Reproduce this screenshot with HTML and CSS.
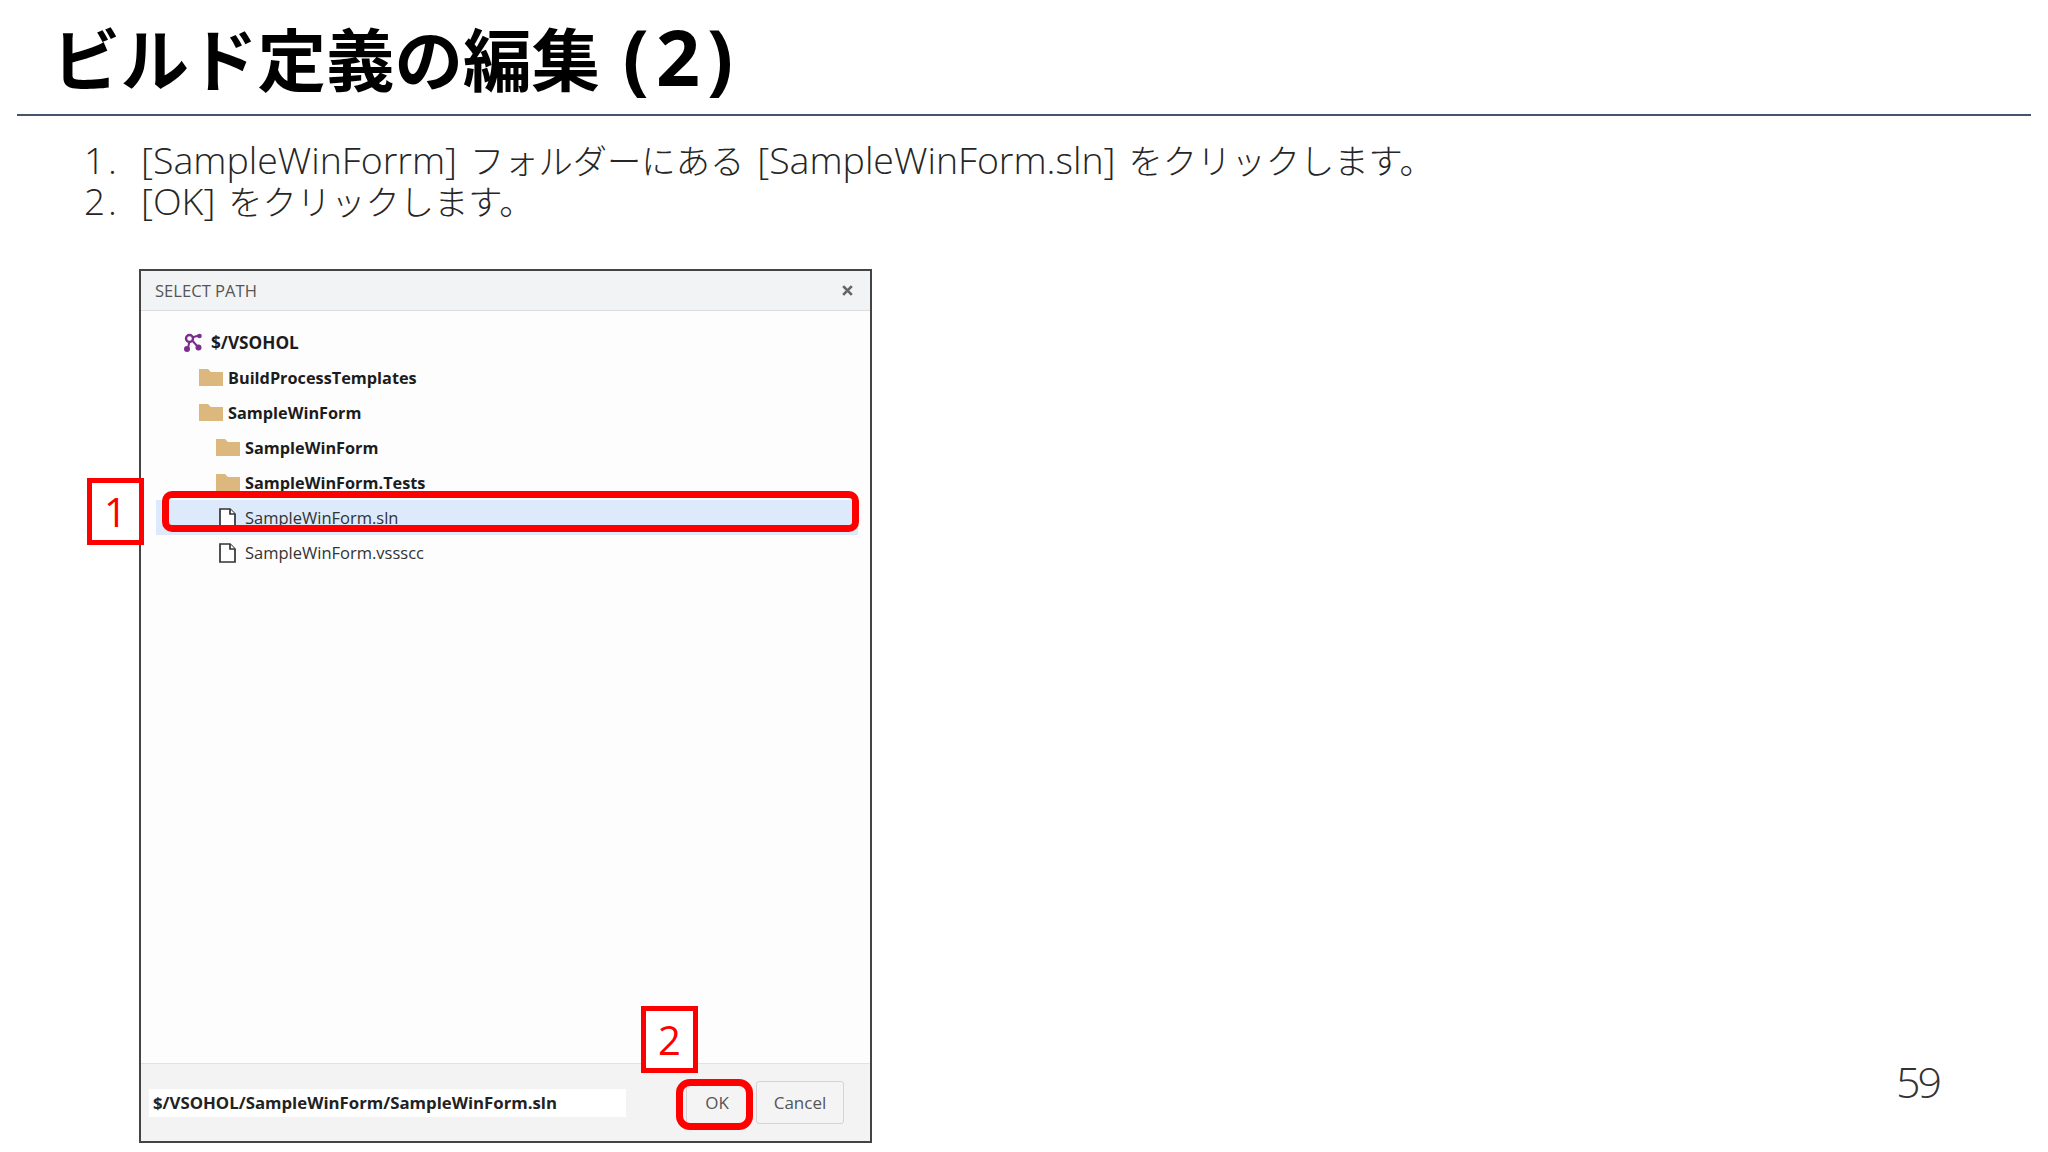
FILE: index.html
```html
<!DOCTYPE html>
<html lang="ja">
<head>
  <meta charset="UTF-8">
  <title>ビルド定義の編集 (2)</title>
  <link rel="stylesheet" href="styles.css">
</head>
<body>
  <div class="header">
    <h1>ビルド定義の編集 <span class="title-num">(2)</span></h1>
  </div>

  <ol class="steps">
    <li><span class="step-no">1.</span><span><span class="lat">[SampleWinForrm]</span> フォルダーにある <span class="lat">[SampleWinForm.sln]</span> をクリックします。</span></li>
    <li><span class="step-no">2.</span><span><span class="lat">[OK]</span> をクリックします。</span></li>
  </ol>

  <div class="content">
    <div class="dialog">
      <div class="dialog-title">
        <span>SELECT PATH</span>
        <svg class="close" viewBox="0 0 12 12"><path d="M2 2l8 8M10 2l-8 8"/></svg>
      </div>

      <div class="tree">
        <div class="row root">
          <svg class="repo-icon" viewBox="0 0 18 19">
            <path d="M6 5l8 9M6 5l9-2.500M6 5l-2 10.500" class="repo-line"/>
            <circle cx="5.500" cy="5.500" r="3.500" class="repo-ring"/>
            <circle cx="15.500" cy="3" r="2.300"/>
            <circle cx="14.500" cy="14.500" r="3"/>
            <circle cx="3" cy="16" r="3"/>
          </svg>
          <span>$/VSOHOL</span>
        </div>
        <div class="row level1">
          <svg class="folder" viewBox="0 0 24 17"><path d="M0 0h9l3 3h12v14H0z"/></svg>
          <span>BuildProcessTemplates</span>
        </div>
        <div class="row level1">
          <svg class="folder" viewBox="0 0 24 17"><path d="M0 0h9l3 3h12v14H0z"/></svg>
          <span>SampleWinForm</span>
        </div>
        <div class="row level2">
          <svg class="folder" viewBox="0 0 24 17"><path d="M0 0h9l3 3h12v14H0z"/></svg>
          <span>SampleWinForm</span>
        </div>
        <div class="row level2">
          <svg class="folder" viewBox="0 0 24 17"><path d="M0 0h9l3 3h12v14H0z"/></svg>
          <span>SampleWinForm.Tests</span>
        </div>
        <div class="row level2 file selected">
          <svg class="file-icon" viewBox="0 0 17 20"><path d="M1 1h10l5 5v13H1z"/><path d="M11 1v5h5"/></svg>
          <span>SampleWinForm.sln</span>
        </div>
        <div class="row level2 file">
          <svg class="file-icon" viewBox="0 0 17 20"><path d="M1 1h10l5 5v13H1z"/><path d="M11 1v5h5"/></svg>
          <span>SampleWinForm.vssscc</span>
        </div>
      </div>

      <div class="dialog-footer">
        <div class="path-input">$/VSOHOL/SampleWinForm/SampleWinForm.sln</div>
        <button class="btn">OK</button>
        <button class="btn">Cancel</button>
      </div>

      <!-- 赤枠の注釈 -->
      <div class="mark mark-row"></div>
      <div class="mark mark-ok"></div>
      <div class="callout callout-1">1</div>
      <div class="callout callout-2">2</div>
    </div>

    <div class="page-no">59</div>
  </div>
</body>
</html>
```

FILE: styles.css
```css
body {
  margin: 0;
  height: 1152px;
  overflow: hidden;
  background: #fff;
  font-family: "Open Sans", "Noto Sans CJK JP", sans-serif;
}

.header {
  margin: 0 17px;
  height: 114px;
  padding-left: 35px;
  border-bottom: 2px solid #44546a;
}

.header h1 {
  margin: 0;
  padding-top: 15px;
  font-family: "Noto Sans", "Noto Sans CJK JP", sans-serif;
  font-size: 68.500px;
  line-height: 90px;
  font-weight: 700;
  color: #000;
}

.title-num {
  margin-left: 5px;
  font-size: 77px;
  line-height: 70px;
  letter-spacing: 7px;
}

.steps {
  margin: 0;
  padding: 23px 0 0 84px;
  list-style: none;
  font-size: 34.300px;
  line-height: 41px;
  font-weight: 300;
  word-spacing: 4px;
  color: #262626;
}

.steps li {
  display: flex;
  height: 41px;
}

.step-no {
  width: 57px;
  font-size: 37px;
  letter-spacing: 3px;
}

.lat {
  font-size: 37.500px;
}

.content {
  display: flex;
  justify-content: space-between;
  align-items: flex-end;
  margin-top: 48px;
  padding: 0 109px 0 139px;
}

.dialog {
  position: relative;
  display: flex;
  flex-direction: column;
  box-sizing: border-box;
  width: 733px;
  height: 874px;
  border: 2px solid #444;
  background: #fdfdfe;
  color: #222;
}

.dialog-title {
  display: flex;
  justify-content: space-between;
  align-items: center;
  box-sizing: border-box;
  height: 40px;
  padding: 0 16px 0 14px;
  border-bottom: 1px solid #dcdcdc;
  background: #f2f3f4;
  font-size: 16.600px;
  color: #555;
}

.close {
  width: 13px;
  height: 13px;
}

.close path {
  fill: none;
  stroke: #666;
  stroke-width: 2.500;
}

.tree {
  flex: 1;
  padding-top: 14px;
}

.row {
  display: flex;
  align-items: center;
  height: 35px;
  font-size: 16.300px;
  font-weight: 700;
  color: #1c1c1c;
}

.root {
  padding-left: 43px;
  font-size: 17.200px;
}

.level1 {
  padding-left: 58px;
  gap: 5px;
}

.level2 {
  padding-left: 75px;
  gap: 5px;
}

.file {
  font-weight: 400;
  font-size: 16.500px;
  color: #333;
  gap: 9px;
  padding-left: 78px;
}

.selected {
  margin: 0 12px 0 15px;
  padding-left: 63px;
  background: #dceafb;
}

.repo-icon {
  width: 18px;
  height: 19px;
  margin-right: 9px;
  fill: #7b2d8e;
}

.repo-line {
  fill: none;
  stroke: #7b2d8e;
  stroke-width: 2;
}

.repo-ring {
  fill: #fdfdfe;
  stroke: #7b2d8e;
  stroke-width: 2.400;
}

.folder {
  width: 24px;
  height: 17px;
  fill: #dcb87e;
}

.file-icon {
  width: 17px;
  height: 20px;
  fill: #fff;
  stroke: #333;
  stroke-width: 1.700;
}

.dialog-footer {
  display: flex;
  align-items: center;
  box-sizing: border-box;
  height: 78px;
  padding: 0 20px 0 8px;
  border-top: 1px solid #e2e2e2;
  background: #f3f3f4;
}

.path-input {
  box-sizing: border-box;
  width: 477px;
  height: 28px;
  margin-right: 60px;
  padding-left: 4px;
  background: #fff;
  font-size: 16.800px;
  line-height: 28px;
  font-weight: 700;
  color: #222;
}

.btn {
  box-sizing: border-box;
  height: 43px;
  padding: 0;
  border: 1px solid #d4d4d4;
  border-radius: 3px;
  background: #f4f4f5;
  font-family: inherit;
  font-size: 17px;
  color: #555;
}

.btn:first-of-type {
  width: 62px;
  margin-right: 8px;
}

.btn:last-of-type {
  width: 88px;
}

.mark {
  position: absolute;
  box-sizing: border-box;
  border: 7px solid #f00;
  border-radius: 10px;
}

.mark-row {
  left: 21px;
  top: 220px;
  width: 697px;
  height: 41px;
}

.mark-ok {
  left: 535px;
  top: 808px;
  width: 77px;
  height: 51px;
  border-radius: 14px;
}

.callout {
  position: absolute;
  box-sizing: border-box;
  border: 5px solid #f00;
  background: #fff;
  color: #f00;
  font-size: 40px;
  font-weight: 400;
  text-align: center;
}

.callout-1 {
  left: -54px;
  top: 207px;
  width: 57px;
  height: 67px;
  line-height: 57px;
}

.callout-2 {
  left: 500px;
  top: 735px;
  width: 57px;
  height: 67px;
  line-height: 57px;
}

.page-no {
  margin-bottom: 32px;
  font-size: 43px;
  letter-spacing: -3px;
  font-weight: 300;
  color: #333;
}
```
